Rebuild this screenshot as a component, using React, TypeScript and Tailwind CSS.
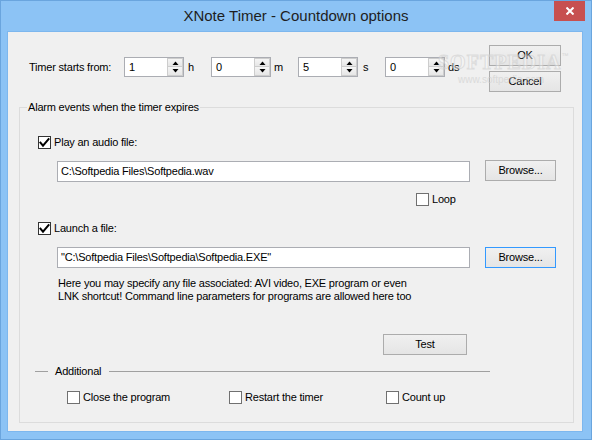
import React from "react";

const Check = ({ checked }: { checked?: boolean }) => (
  <span
    className={`w-[13px] h-[13px] shrink-0 border bg-white flex items-center justify-center ${
      checked ? "border-[#333333]" : "border-[#707070]"
    }`}
  >
    {checked && (
      <svg width="11" height="11" viewBox="0 0 11 11">
        <path d="M0.8 4.8 L4 8.6 L10.2 1.4" stroke="#000" strokeWidth="2" fill="none" />
      </svg>
    )}
  </span>
);

const Button = ({ label, w, focused }: { label: string; w: string; focused?: boolean }) => (
  <button
    className={`${w} h-[21px] shrink-0 border bg-linear-to-b from-[#f0f0f0] to-[#e5e5e5] text-black leading-none flex items-center justify-center ${
      focused ? "border-[#3399ff]" : "border-[#acacac]"
    }`}
  >
    {label}
  </button>
);

const Spin = ({ value }: { value: string }) => (
  <div className="w-[60px] h-[20px] shrink-0 border border-[#abadb3] bg-white flex">
    <span className="flex-1 pl-[4px] leading-[18px]">{value}</span>
    <div className="w-[16px] flex flex-col">
      <span className="h-[9px] border border-[#cdcdcd] bg-linear-to-b from-[#f5f5f5] to-[#e6e6e6] flex items-center justify-center">
        <svg width="7" height="4" viewBox="0 0 7 4">
          <path d="M0.5 4 L3.5 0.5 L6.5 4 Z" fill="#000" />
        </svg>
      </span>
      <span className="h-[9px] border border-t-0 border-[#cdcdcd] bg-linear-to-b from-[#f5f5f5] to-[#e6e6e6] flex items-center justify-center">
        <svg width="7" height="4" viewBox="0 0 7 4">
          <path d="M0.5 0 L3.5 3.5 L6.5 0 Z" fill="#000" />
        </svg>
      </span>
    </div>
  </div>
);

const TextBox = ({ value, extra }: { value: string; extra?: string }) => (
  <div className={`w-[413px] h-[21px] shrink-0 border border-[#abadb3] bg-white pl-[3px] leading-[19px] whitespace-nowrap ${extra ?? ""}`}>
    {value}
  </div>
);

export default function App() {
  return (
    <div className="relative w-[592px] h-[440px] flex flex-col overflow-hidden bg-[#8cc3f5] border border-[#6aa5de] font-['Liberation_Sans',Arial,sans-serif] text-[11px] tracking-[-0.2px] text-black select-none">
      {/* title bar */}
      <div className="h-[30px] grid grid-cols-[1fr_auto_1fr] items-center">
        <div />
        <div className="text-[15px] tracking-normal text-[#1e1e1e]">XNote Timer - Countdown options</div>
        <div className="justify-self-end self-start -mt-[1px] mr-[6px] w-[31px] h-[21px] bg-[#c75050] flex items-center justify-center">
          <svg width="8" height="8" viewBox="0 0 8 8">
            <path d="M0.5 0.5 L7.5 7.5 M7.5 0.5 L0.5 7.5" stroke="#fff" strokeWidth="2" />
          </svg>
        </div>
      </div>

      {/* client area */}
      <div className="flex-1 ml-[6px] mr-[8px] mb-[7px] bg-[#f0f0f0] border border-[#7db7ee] flex flex-col pl-[11px] pr-[8px] pb-[8px]">
        <div className="h-[75px] flex items-start shrink-0">
          <div className="flex items-center h-[20px] mt-[25px] ml-[10px]">
            <span className="w-[95px]">Timer starts from:</span>
            <Spin value="1" />
            <span className="w-[27px] pl-[4px]">h</span>
            <Spin value="0" />
            <span className="w-[27px] pl-[3px]">m</span>
            <Spin value="5" />
            <span className="w-[27px] pl-[5px]">s</span>
            <Spin value="0" />
            <span className="pl-[3px]">ds</span>
          </div>
          <div className="ml-auto mr-[13px] mt-[13px] flex flex-col gap-[5px]">
            <Button label="OK" w="w-[72px]" />
            <Button label="Cancel" w="w-[72px]" />
          </div>
        </div>

        <div className="flex-1 border border-[#dcdcdc] flex flex-col">
          <div className="-mt-[7px] ml-[7px] px-[1px] w-fit h-[13px] leading-[13px] bg-[#f0f0f0]">
            Alarm events when the timer expires
          </div>

          <div className="mt-[22px] ml-[18px] h-[13px] flex items-center gap-[3px]">
            <Check checked />
            <span>Play an audio file:</span>
          </div>
          <div className="mt-[11px] ml-[37px] flex items-start">
            <TextBox value="C:\Softpedia Files\Softpedia.wav" extra="mt-[1px]" />
            <span className="ml-[15px]">
              <Button label="Browse..." w="w-[71px]" />
            </span>
          </div>
          <div className="mt-[11px] ml-[396px] h-[13px] flex items-center gap-[3px]">
            <Check />
            <span>Loop</span>
          </div>

          <div className="mt-[16px] ml-[18px] h-[13px] flex items-center gap-[3px]">
            <Check checked />
            <span>Launch a file:</span>
          </div>
          <div className="mt-[12px] ml-[37px] flex items-start">
            <TextBox value={'"C:\\Softpedia Files\\Softpedia\\Softpedia.EXE"'} />
            <span className="ml-[15px]">
              <Button label="Browse..." w="w-[71px]" focused />
            </span>
          </div>
          <div className="mt-[9px] ml-[38px] leading-[13px] whitespace-nowrap">
            <div>Here you may specify any file associated: AVI video, EXE program or even</div>
            <div>LNK shortcut! Command line parameters for programs are allowed here too</div>
          </div>

          <div className="mt-[31px] ml-[363px]">
            <Button label="Test" w="w-[84px]" />
          </div>

          <div className="mt-[10px] ml-[15px] w-[455px] h-[13px] flex items-center">
            <span className="w-[13px] h-px bg-[#a0a0a0]" />
            <span className="ml-[7px] mr-[8px]">Additional</span>
            <span className="flex-1 h-px bg-[#a0a0a0]" />
          </div>

          <div className="mt-[13px] ml-[47px] h-[13px] flex items-center">
            <div className="w-[162px] flex items-center gap-[3px]">
              <Check />
              <span>Close the program</span>
            </div>
            <div className="w-[157px] flex items-center gap-[3px]">
              <Check />
              <span>Restart the timer</span>
            </div>
            <div className="flex items-center gap-[3px]">
              <Check />
              <span>Count up</span>
            </div>
          </div>
        </div>
      </div>

      {/* watermark */}
      <div className="absolute left-[437px] top-[49px] pointer-events-none opacity-60">
        <div className="flex items-start">
          <span className="text-[20px] leading-[24px] font-bold tracking-[1px] text-white/60 [-webkit-text-stroke:1px_#d0d0d0] font-['Liberation_Serif',serif]">
            SOFTPEDIA
          </span>
          <span className="text-[7px] text-[#c8c8c8] mt-[1px]">™</span>
        </div>
        <div className="ml-[20px] leading-[12px] text-[10px] tracking-normal text-[#cdcdcd]">www.softpedia.com</div>
      </div>
    </div>
  );
}
